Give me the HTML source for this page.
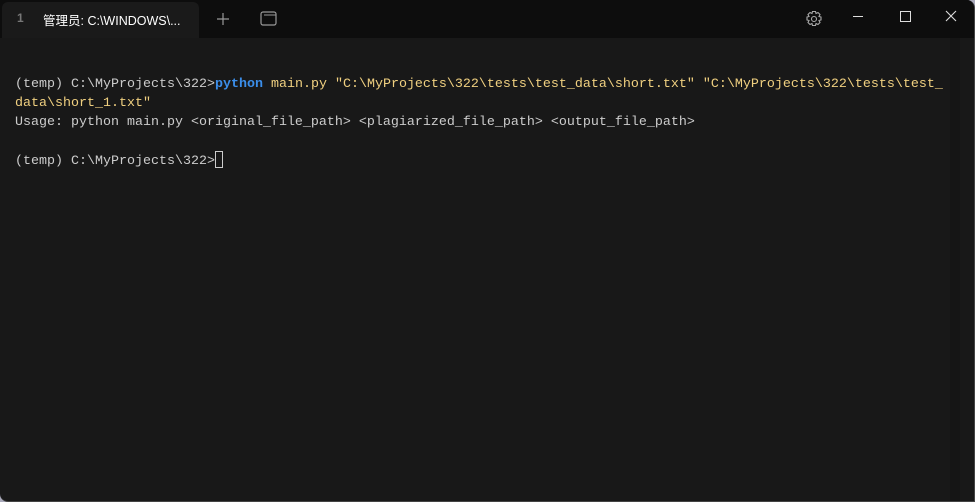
<!DOCTYPE html>
<html><head><meta charset="utf-8"><style>
html,body{margin:0;padding:0;width:975px;height:502px;overflow:hidden;background:#aab}
.win{position:absolute;left:0;top:0;width:974px;height:501px;background:#181818;border-radius:0 8px 0 8px;overflow:hidden;border-right:1px solid #444;border-bottom:1px solid #444}
.bar{position:absolute;left:0;top:0;width:100%;height:38px;background:#0d0d0d}
.tab{position:absolute;left:2px;top:2px;width:197px;height:36px;background:#1a1a1a;border-radius:6px 6px 0 0}
.t{position:absolute;font-family:"Liberation Sans","Noto Sans CJK SC",sans-serif;font-size:12.5px;color:#fff}
.term{position:absolute;left:15px;top:75px;font-family:"Liberation Mono",monospace;font-size:13.33px;line-height:19px;color:#cccccc;white-space:pre}
.b{color:#3b8eea;font-weight:bold}.y{color:#f0d080}
.sb{position:absolute;left:950px;top:38px;width:10px;height:463px;background:#151515}
</style></head><body>
<div class="win">
<div class="bar"></div>
<div class="tab"></div>
<div class="t" style="left:17px;top:11px;color:#777;font-weight:bold;font-size:12px">1</div>
<div class="t" style="left:43px;top:10px">管理员: C:\WINDOWS\...</div>
<svg style="position:absolute;left:214px;top:10px" width="18" height="18"><path d="M9 3v12M3 9h12" stroke="#999" stroke-width="1.2"/></svg>
<svg style="position:absolute;left:258px;top:9px" width="22" height="20"><rect x="3" y="3" width="15" height="13" rx="2" fill="none" stroke="#999" stroke-width="1.2"/><path d="M6 6h12" stroke="#999"/></svg>
<svg style="position:absolute;left:804px;top:9px" width="20" height="20" viewBox="0 0 20 20"><circle cx="10" cy="10" r="2.5" fill="none" stroke="#aaa" stroke-width="1.1"/><path d="M8.5 2.5h3l.5 2 2-1 2 2-1 2 2 .5v3l-2 .5 1 2-2 2-2-1-.5 2h-3l-.5-2-2 1-2-2 1-2-2-.5v-3l2-.5-1-2 2-2 2 1z" fill="none" stroke="#aaa" stroke-width="1.1"/></svg>
<div style="position:absolute;left:853px;top:16px;width:10px;height:1px;background:#ddd"></div>
<div style="position:absolute;left:900px;top:11px;width:9px;height:9px;border:1px solid #ddd"></div>
<svg style="position:absolute;left:945px;top:10px" width="12" height="12"><path d="M1 1l10 10M11 1L1 11" stroke="#ddd" stroke-width="1.1"/></svg>
<div class="sb"></div>
<div class="term">(temp) C:\MyProjects\322&gt;<span class="b">python</span> <span class="y">main.py "C:\MyProjects\322\tests\test_data\short.txt" "C:\MyProjects\322\tests\test_</span>
<span class="y">data\short_1.txt"</span>
Usage: python main.py &lt;original_file_path&gt; &lt;plagiarized_file_path&gt; &lt;output_file_path&gt;

(temp) C:\MyProjects\322&gt;<span style="display:inline-block;width:8px;height:17px;border:1px solid #ccc;box-sizing:border-box;vertical-align:-4px"></span></div>
</div>
</body></html>
